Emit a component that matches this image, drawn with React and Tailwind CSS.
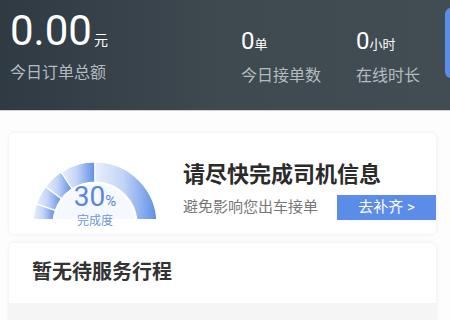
import React from 'react';

const cn = '"Roboto", "Noto Sans CJK SC", sans-serif';

// annular sector, angle measured from the left end of the half circle
const sector = (cx, cy, r1, r2, a1, a2) => {
  const rad = (a) => (a * Math.PI) / 180;
  const pt = (r, a) => [cx - r * Math.cos(rad(a)), cy - r * Math.sin(rad(a))];
  const [x1, y1] = pt(r2, a1);
  const [x2, y2] = pt(r2, a2);
  const [x3, y3] = pt(r1, a2);
  const [x4, y4] = pt(r1, a1);
  return `M${x1},${y1} A${r2},${r2} 0 0 1 ${x2},${y2} L${x3},${y3} A${r1},${r1} 0 0 0 ${x4},${y4} Z`;
};

const Gauge = () => {
  const cx = 66, cy = 75;
  const cuts = [0, 19, 37, 57, 90, 180];
  return (
    <svg width="132" height="70" viewBox="0 0 132 70" className="block">
      <defs>
        <linearGradient id="g" x1="0" y1="0" x2="1" y2="0">
          <stop offset="0" stopColor="#e9effc" />
          <stop offset="0.45" stopColor="#c3d5f6" />
          <stop offset="1" stopColor="#5f8ee6" />
        </linearGradient>
      </defs>
      <circle cx={cx} cy={cy} r="40" fill="#f5f8fe" />
      {cuts.slice(0, -1).map((a, i) => (
        <path key={i} d={sector(cx, cy, 42, 62, a, cuts[i + 1])} fill="url(#g)" stroke="#ffffff" strokeWidth="1.2" />
      ))}
    </svg>
  );
};

const App = () => {
  return (
    <div className="w-[450px] h-[320px] overflow-hidden bg-[#fdfdfd]" style={{ fontFamily: cn }}>
      {/* Header */}
      <div className="h-[111px] flex bg-gradient-to-r from-[#2f3a42] via-[#3f4950] to-[#424c53] border-b border-[#cfd2d4]">
        <div className="pl-[10px] pt-[10px] w-[241px] shrink-0">
          <div className="flex items-baseline text-white">
            <span className="text-[42px] leading-none font-normal">0.00</span>
            <span className="text-[14px] ml-[2px]">元</span>
          </div>
          <div className="mt-[13px] text-[16px] text-[#b4bbc0] leading-none">今日订单总额</div>
        </div>
        <div className="pt-[29px] w-[115px] shrink-0">
          <div className="flex items-baseline text-white">
            <span className="text-[24px] leading-none">0</span>
            <span className="text-[13px]">单</span>
          </div>
          <div className="mt-[13px] text-[16px] text-[#b4bbc0] leading-none">今日接单数</div>
        </div>
        <div className="pt-[29px] w-[89px] shrink-0">
          <div className="flex items-baseline text-white">
            <span className="text-[24px] leading-none">0</span>
            <span className="text-[13px]">小时</span>
          </div>
          <div className="mt-[13px] text-[16px] text-[#b4bbc0] leading-none">在线时长</div>
        </div>
        <div className="mt-[8px] h-[70px] w-[8px] shrink-0 rounded-l-[6px] bg-[#5b8de8]" />
      </div>

      {/* Info card */}
      <div className="ml-[9px] mr-[14px] mt-[22px] h-[101px] rounded-[5px] bg-white shadow-[0_0_4px_rgba(0,0,0,0.08)] flex items-start overflow-hidden">
        <div className="relative ml-[20px] mt-[16px] w-[132px] h-[70px] shrink-0">
          <Gauge />
          <div className="absolute left-0 right-0 top-[34px] flex flex-col items-center">
            <div className="flex items-baseline text-[#5a87d8] leading-none">
              <span className="text-[28px]">30</span>
              <span className="text-[15px]">%</span>
            </div>
            <div className="text-[12px] text-[#6f95db] leading-none mt-[4px]">完成度</div>
          </div>
        </div>
        <div className="ml-[22px] flex-1 pt-[31px]">
          <div className="text-[22px] font-bold text-[#2b2b2b] leading-none">请尽快完成司机信息</div>
          <div className="mt-[9px] flex items-center">
            <span className="text-[15px] text-[#777777] leading-none">避免影响您出车接单</span>
            <div className="ml-auto w-[99px] h-[25px] bg-[#5b8de8] text-white text-[15px] flex items-center justify-center leading-none">
              去补齐 &gt;
            </div>
          </div>
        </div>
      </div>

      {/* Trip card */}
      <div className="ml-[9px] mr-[14px] mt-[9px] h-[90px] rounded-[5px] bg-white shadow-[0_0_4px_rgba(0,0,0,0.08)] flex flex-col overflow-hidden">
        <div className="h-[60px] pl-[23px] pt-[19px]">
          <div className="text-[20px] font-bold text-[#333333] leading-none">暂无待服务行程</div>
        </div>
        <div className="flex-1 bg-[#f5f5f5]" />
      </div>
    </div>
  );
};

export default App;
